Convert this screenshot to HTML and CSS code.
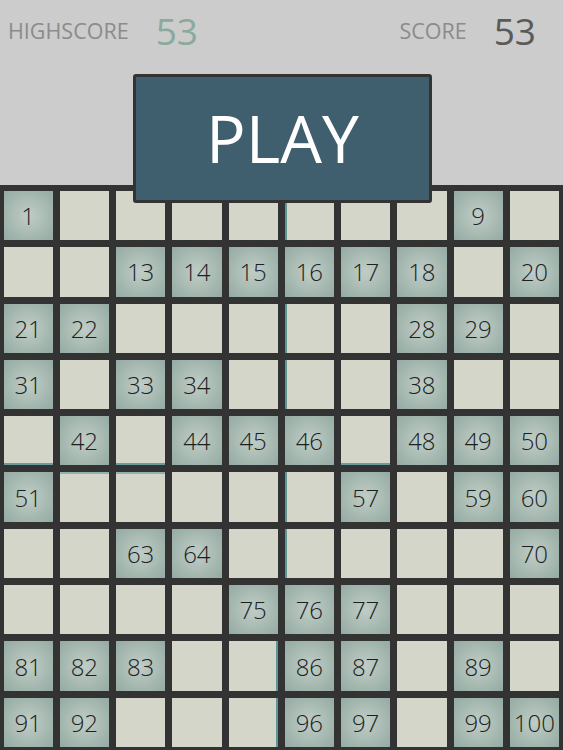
FILE: index.html
```html
<!DOCTYPE html>
<html>
<head>
<meta charset="utf-8">
<link rel="stylesheet" href="styles.css">
</head>
<body>
<div class="app">
  <header class="top">
    <div class="scores">
      <div class="score-group">
        <span class="label">HIGHSCORE</span>
        <span class="value high">53</span>
      </div>
      <div class="score-group">
        <span class="label">SCORE</span>
        <span class="value cur">53</span>
      </div>
    </div>
    <button class="play">PLAY</button>
  </header>
  <main class="board" id="board"></main>
</div>
<script src="app.js"></script>
</body>
</html>
```
FILE: styles.css
```css
html, body {
  margin: 0;
  padding: 0;
  background: #cccccc;
}
.app {
  width: 563px;
  height: 750px;
  overflow: hidden;
  position: relative;
  font-family: "Open Sans", "Noto Sans", sans-serif;
}
.top {
  height: 185px;
  background: #cccccc;
  position: relative;
}
.scores {
  display: flex;
  justify-content: space-between;
  padding: 0 27px 0 8px;
  height: 61px;
  align-items: center;
}
.score-group {
  display: flex;
  align-items: center;
  gap: 27px;
}
.label {
  font-size: 21.5px;
  color: #8b8b8b;
}
.value {
  font-size: 37px;
  line-height: 1;
}
.value.high { color: #8aaa9b; }
.value.cur { color: #5a5a5a; }
.play {
  position: absolute;
  left: 133px;
  top: 74px;
  width: 299px;
  height: 129px;
  box-sizing: border-box;
  background: #3f5e6e;
  border: 3px solid #333333;
  border-radius: 3px;
  color: #ffffff;
  font-family: "Open Sans", "Noto Sans", sans-serif;
  font-size: 66px;
  line-height: 1;
  padding: 0 0 4px 0;
  z-index: 2;
}
.board {
  height: 565px;
  background: #333333;
  box-sizing: border-box;
  padding: 6px 4px 0 3.5px;
  display: grid;
  grid-template-columns: repeat(10, 1fr);
  grid-auto-rows: 49.3px;
  gap: 7px;
}
.tile {
  background: #d3d6c8;
  display: flex;
  align-items: center;
  justify-content: center;
  font-family: "Open Sans", "Noto Sans", sans-serif;
  font-weight: 300;
  font-size: 24px;
  color: #1c211f;
  box-sizing: border-box;
}
.tile.on {
  background: radial-gradient(circle at 50% 50%, #c0cdc6 0%, #aabcb4 50%, #93aaa2 100%);
}
.tile.edge-left { box-shadow: inset 2px 0 0 #5e9597; }
.tile.edge-right { box-shadow: inset -2px 0 0 #5e9597; }
.tile.edge-bottom { box-shadow: inset 0 -2px 0 #6a9c9c; }
.tile.edge-top { box-shadow: inset 0 2px 0 #8fb3b0; }
```
FILE: app.js
```js
var on = [1,9,13,14,15,16,17,18,20,21,22,28,29,31,33,34,38,42,44,45,46,48,49,50,51,57,59,60,63,64,70,75,76,77,81,82,83,86,87,89,91,92,96,97,99,100];
var edges = {6:'edge-left',26:'edge-left',36:'edge-left',56:'edge-left',66:'edge-left',41:'edge-bottom',43:'edge-bottom',47:'edge-bottom',52:'edge-top',53:'edge-top',85:'edge-right',95:'edge-right'};
var board = document.getElementById('board');
for (var i = 1; i <= 100; i++) {
  var t = document.createElement('div');
  t.className = 'tile';
  if (on.indexOf(i) >= 0) { t.className += ' on'; t.textContent = i; }
  if (edges[i]) t.className += ' ' + edges[i];
  board.appendChild(t);
}
```
